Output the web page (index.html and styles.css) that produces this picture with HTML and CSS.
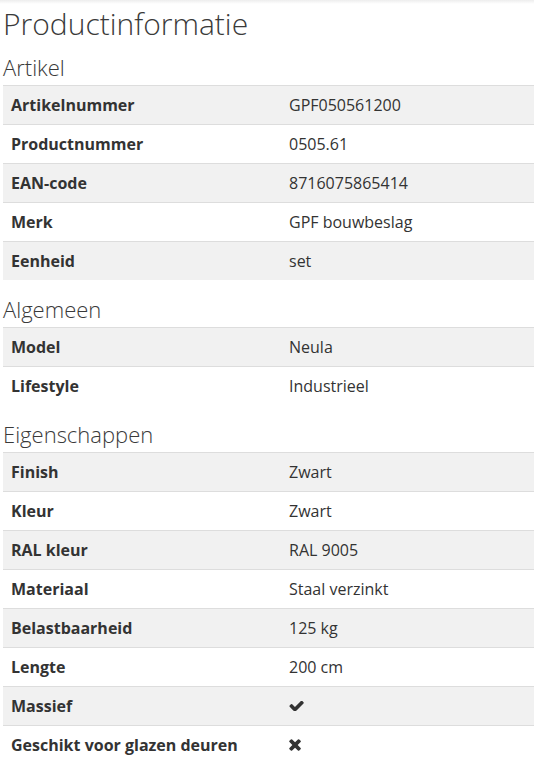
FILE: index.html
```html
<!DOCTYPE html>
<html lang="nl">
<head>
<meta charset="utf-8">
<title>Productinformatie</title>
<link rel="stylesheet" href="styles.css">
</head>
<body>
<div class="topshade"></div>
<main class="content">
  <h1 class="title">Productinformatie</h1>

  <h2 class="group">Artikel</h2>
  <table class="specs">
    <tr><th>Artikelnummer</th><td>GPF050561200</td></tr>
    <tr><th>Productnummer</th><td>0505.61</td></tr>
    <tr><th>EAN-code</th><td>8716075865414</td></tr>
    <tr><th>Merk</th><td>GPF bouwbeslag</td></tr>
    <tr><th>Eenheid</th><td>set</td></tr>
  </table>

  <h2 class="group">Algemeen</h2>
  <table class="specs">
    <tr><th>Model</th><td>Neula</td></tr>
    <tr><th>Lifestyle</th><td>Industrieel</td></tr>
  </table>

  <h2 class="group">Eigenschappen</h2>
  <table class="specs">
    <tr><th>Finish</th><td>Zwart</td></tr>
    <tr><th>Kleur</th><td>Zwart</td></tr>
    <tr><th>RAL kleur</th><td>RAL 9005</td></tr>
    <tr><th>Materiaal</th><td>Staal verzinkt</td></tr>
    <tr><th>Belastbaarheid</th><td>125 kg</td></tr>
    <tr><th>Lengte</th><td>200 cm</td></tr>
    <tr><th>Massief</th><td><svg class="ico ico-check" viewBox="90 370 1590 1080" aria-label="ja"><path d="M1671 566q0 40-28 68l-724 724-136 136q-28 28-68 28t-68-28l-136-136-362-362q-28-28-28-68t28-68l136-136q28-28 68-28t68 28l294 295 656-657q28-28 68-28t68 28l136 136q28 28 28 68z"/></svg></td></tr>
    <tr><th>Geschikt voor glazen deuren</th><td><svg class="ico ico-times" viewBox="90 350 1220 1220" aria-label="nee"><path d="M1298 1322q0 40-28 68l-136 136q-28 28-68 28t-68-28l-294-294-294 294q-28 28-68 28t-68-28l-136-136q-28-28-28-68t28-68l294-294-294-294q-28-28-28-68t28-68l136-136q28-28 68-28t68 28l294 294 294-294q28-28 68-28t68 28l136 136q28 28 28 68t-28 68l-294 294 294 294q28 28 28 68z"/></svg></td></tr>
  </table>
</main>
</body>
</html>
```

FILE: styles.css
```css
html, body {
  margin: 0;
  padding: 0;
  background: #fff;
}
body {
  font-family: "Open Sans", "Liberation Sans", sans-serif;
  color: #333;
  position: relative;
}
.topshade {
  height: 4px;
  background: linear-gradient(to bottom, rgba(0,0,0,0.07), rgba(0,0,0,0));
  position: absolute;
  top: 0;
  left: 0;
  right: 0;
}
.content {
  padding: 0 0 0 3px;
}
.title {
  margin: 0;
  font-weight: 300;
  font-size: 30px;
  line-height: 47px;
  color: #3a3a3a;
}
.group {
  margin: 0;
  padding-top: 2px;
  font-weight: 300;
  font-size: 22px;
  line-height: 36px;
  color: #3a3a3a;
}
.specs {
  width: 100%;
  border-collapse: collapse;
  margin-bottom: 9px;
  font-size: 16px;
}
.specs th, .specs td {
  border-top: 1px solid #ddd;
  height: 38px;
  padding: 0 8px;
  text-align: left;
  vertical-align: middle;
  line-height: 20px;
}
.specs th {
  width: 262px;
  font-weight: 700;
  color: #333;
}
.specs td {
  font-weight: 400;
  color: #333;
}
.specs tr:nth-child(odd) th,
.specs tr:nth-child(odd) td {
  background: #f1f1f1;
}
.ico {
  display: block;
  fill: #333;
}
.ico-check {
  width: 15px;
  height: 10px;
}
.ico-times {
  width: 12px;
  height: 12px;
}
```
